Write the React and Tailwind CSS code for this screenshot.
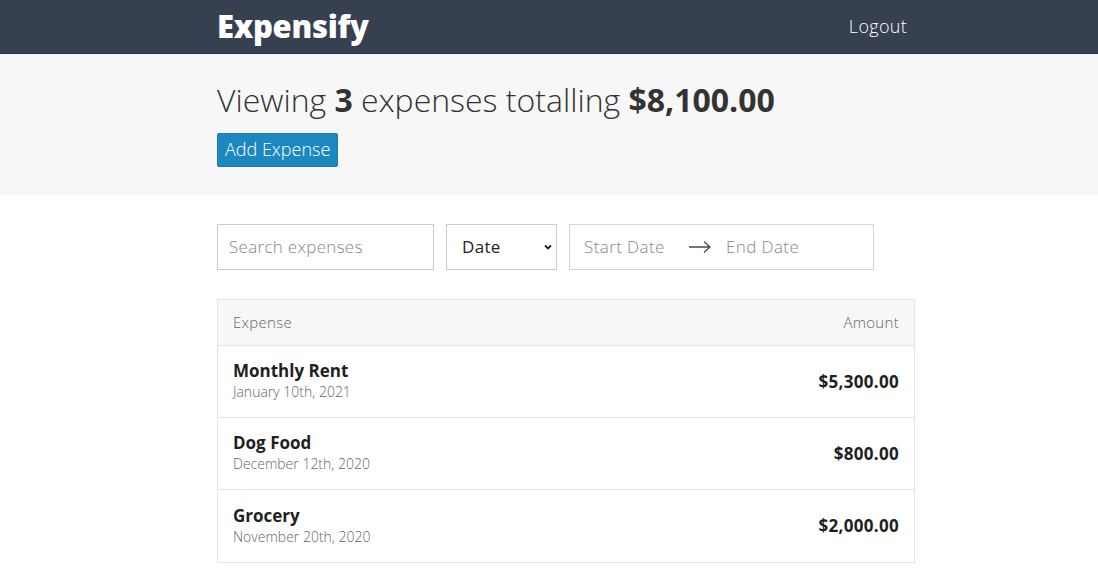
import React from "react";

const expenses = [
  { title: "Monthly Rent", date: "January 10th, 2021", amount: "$5,300.00" },
  { title: "Dog Food", date: "December 12th, 2020", amount: "$800.00" },
  { title: "Grocery", date: "November 20th, 2020", amount: "$2,000.00" },
];

export default function App() {
  return (
    <div className="min-h-[583px] bg-white text-[#333] font-['Open_Sans',sans-serif]">
      <header className="h-[54px] bg-[#364051] border-b border-[#2b3340]">
        <div className="w-[732px] mx-auto pl-[34px] h-full flex items-center justify-between">
          <h1 className="text-[31px] font-extrabold text-white tracking-[-0.3px] leading-none">Expensify</h1>
          <button className="text-[18px] font-light text-white mr-[8px] tracking-[0.3px]">Logout</button>
        </div>
      </header>
      <section className="bg-[#f7f7f7] h-[141px]">
        <div className="w-[732px] mx-auto pl-[34px] pt-[26px]">
          <h2 className="text-[32px] font-light leading-[40px] text-[#333]">
            Viewing <span className="font-bold">3</span> expenses totalling <span className="font-bold">$8,100.00</span>
          </h2>
          <button className="mt-[13px] h-[34px] px-[7px] pb-[2px] bg-[#1c88bf] border border-[#1a7bad] rounded-[2px] text-white text-[18px] font-light">
            Add Expense
          </button>
        </div>
      </section>
      <div className="w-[732px] mx-auto pl-[34px] pt-[29px]">
        <div className="flex gap-[12px] h-[46px]">
          <div className="w-[217px] border border-[#ccc] flex items-center px-[11px] text-[17px] font-light text-[#888] tracking-[0.3px]">Search expenses</div>
          <div className="w-[111px] border border-[#ccc] flex items-center justify-between pl-[15px] pr-[3px] text-[17px] text-[#222] tracking-[0.3px]">
            <span>Date</span>
            <svg width="10" height="10" viewBox="0 0 10 10"><path d="M2 3.5 L5 6.5 L8 3.5" stroke="#222" strokeWidth="1.8" fill="none" /></svg>
          </div>
          <div className="w-[305px] border border-[#d4d4d4] flex items-center pl-[14px] text-[17px] font-light text-[#888] tracking-[0.4px]">
            <span className="w-[104px]">Start Date</span>
            <svg width="24" height="14" viewBox="0 0 24 14" className="mr-[14px]"><path d="M1 7 H22 M16 1.5 L22 7 L16 12.5" stroke="#484848" strokeWidth="1.3" fill="none" /></svg>
            <span>End Date</span>
          </div>
        </div>
        <div className="mt-[29px] border border-[#e5e5e5]">
          <div className="h-[46px] bg-[#f7f7f7] border-b border-[#e5e5e5] flex items-center justify-between px-[15px] text-[15px] font-light text-[#666] tracking-[0.3px]">
            <span>Expense</span>
            <span>Amount</span>
          </div>
          {expenses.map((e, i) => (
            <div key={i} className={"h-[72px] flex items-center justify-between px-[15px] " + (i < expenses.length - 1 ? "border-b border-[#e5e5e5]" : "")}>
              <div className="flex flex-col pb-[1px]">
                <span className="text-[17px] font-bold text-[#1f1f1f] leading-[22px]">{e.title}</span>
                <span className="text-[14px] font-light text-[#666] leading-[20px]">{e.date}</span>
              </div>
              <span className="text-[17px] font-bold text-[#1f1f1f] tracking-[0.3px]">{e.amount}</span>
            </div>
          ))}
        </div>
      </div>
    </div>
  );
}
